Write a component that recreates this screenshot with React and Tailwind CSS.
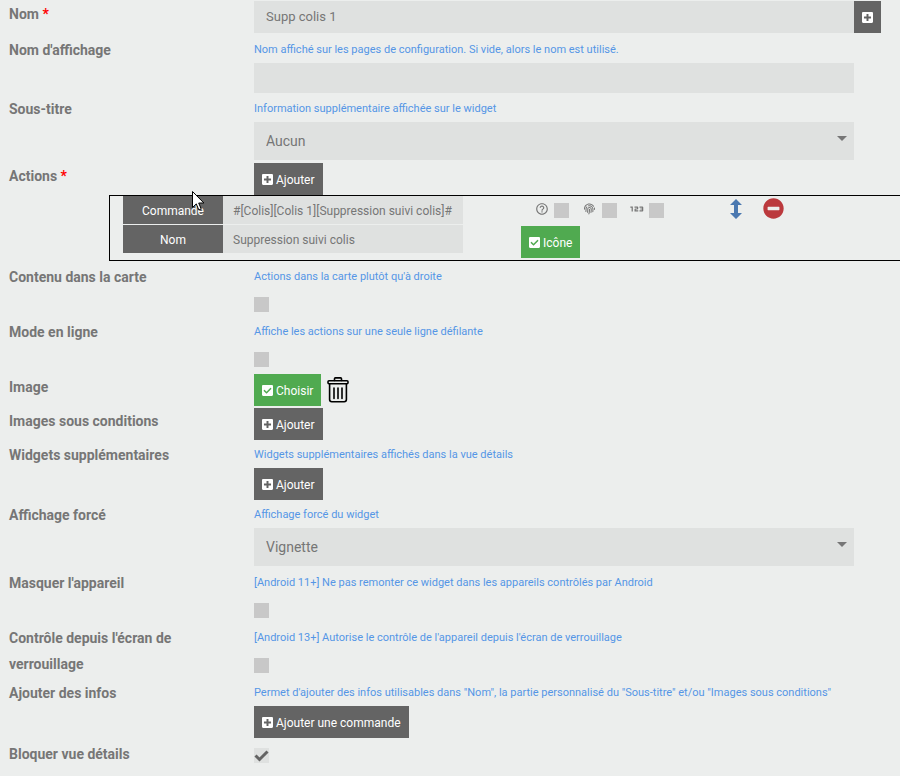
import React from "react";
import { FaPlusSquare, FaCheckSquare, FaFingerprint, FaMinusCircle } from "react-icons/fa";
import { Md123, MdHelpOutline } from "react-icons/md";

const Row = ({ label, htmlFor, required = false, help, className = "pb-[3px]", children }) => (
  <div className={`grid grid-cols-[245px_1fr] items-start pl-[9px] ${className}`}>
    <label htmlFor={htmlFor} className="pr-14 text-sm leading-[26px] font-bold text-[#767676]">
      {label}
      {required && <span className="text-[#ff0000]"> *</span>}
    </label>
    <div className="min-w-0">
      {help && <p className="text-[11px] leading-[26px] text-[#5596e6]">{help}</p>}
      {children}
    </div>
  </div>
);

const Button = ({ icon: Icon, green = false, children }) => (
  <button
    type="button"
    className={`flex h-8 items-center gap-[3px] px-2 pt-px text-xs text-white ${green ? "bg-[#50aa50]" : "bg-[#646464]"}`}
  >
    <Icon className="h-[13px] w-[11px] shrink-0" />
    {children}
  </button>
);

const Checkbox = ({ id, label, defaultChecked = false }) => (
  <span className="relative block h-[15px] w-[15px]">
    <input
      id={id}
      type="checkbox"
      aria-label={label}
      defaultChecked={defaultChecked}
      className="peer block h-[15px] w-[15px] appearance-none bg-[#c8c8c8] checked:bg-[#dfe1e0]"
    />
    <svg
      viewBox="0 0 15 15"
      className="pointer-events-none absolute inset-0 hidden h-[15px] w-[15px] peer-checked:block"
    >
      <path d="M1.5 7.5 5.5 11.5 13.5 3.5" fill="none" stroke="#646464" strokeWidth="3" />
    </svg>
  </span>
);

const CheckboxLine = (props) => (
  <div className="flex h-[26px] items-center pt-0.5">
    <Checkbox {...props} />
  </div>
);

const Select = ({ id, options }) => (
  <div className="relative mr-[46px]">
    <select id={id} className="block h-[38px] w-full appearance-none bg-[#dfe1e0] px-3 text-sm text-[#767676]">
      {options.map((option) => (
        <option key={option}>{option}</option>
      ))}
    </select>
    <svg viewBox="0 0 10 5" className="pointer-events-none absolute top-3.5 right-[7px] h-[5px] w-2.5">
      <path d="M0 0h10L5 5z" fill="#767676" />
    </svg>
  </div>
);

const TrashIcon = () => (
  <svg viewBox="0 0 22 26" className="h-[26px] w-[22px]" fill="none" stroke="#000" strokeWidth="1.6" strokeLinejoin="round" strokeLinecap="round">
    <path d="M7.5 3.5V1.8q0-.9.9-.9h5.2q.9 0 .9.9v1.7" />
    <rect x="1" y="3.8" width="20" height="3" rx="1" />
    <path d="M2.6 7v15.6q0 2.2 2.2 2.2h12.4q2.2 0 2.2-2.2V7" />
    <path d="M7 11v10.5M11 11v10.5M15 11v10.5" />
  </svg>
);

const MoveIcon = () => (
  <svg viewBox="0 0 12 20" className="h-5 w-3" fill="#4a78b0">
    <path d="M6 0l6 6H8v8h4l-6 6-6-6h4V6H0z" />
  </svg>
);

const MousePointer = () => (
  <svg viewBox="0 0 13 20" className="pointer-events-none absolute -top-[5px] left-[82px] h-5 w-[13px]">
    <path d="M.5.5v16l3.8-3.6 2.5 6 2.4-1-2.5-5.9h5.2z" fill="#fff" stroke="#000" />
  </svg>
);

const CommandField = ({ id, label, value }) => (
  <div className="flex h-7 text-xs">
    <label htmlFor={id} className="flex w-[100px] items-center justify-center bg-[#646464] pt-px text-white">
      {label}
    </label>
    <input id={id} defaultValue={value} className="w-60 bg-[#dfe1e0] px-2.5 pt-px text-[#767676]" />
  </div>
);

const ActionCard = () => (
  <div className="relative mb-[3px] ml-[109px] flex items-start border-y border-l border-black pb-[7px] pl-[13px]">
    <div className="flex shrink-0 flex-col gap-px">
      <CommandField id="action-cmd" label="Commande" value="#[Colis][Colis 1][Suppression suivi colis]#" />
      <CommandField id="action-name" label="Nom" value="Suppression suivi colis" />
    </div>
    <div className="-mb-[5px] ml-[58px] shrink-0">
      <div className="mb-px flex h-[29px] items-center pl-3.5 text-[#767676]">
        <MdHelpOutline className="mr-[5px] mb-1 h-3.5 w-3.5" />
        <Checkbox label="Confirmation" />
        <FaFingerprint className="mr-[7px] mb-1 ml-[15px] h-3 w-[11px]" />
        <Checkbox label="Empreinte" />
        <Md123 className="mr-0.5 mb-1 ml-2.5 h-5 w-5" stroke="currentColor" />
        <Checkbox label="Code" />
      </div>
      <Button icon={FaCheckSquare} green>
        Icône
      </Button>
    </div>
    <div className="ml-[66px] flex items-center gap-[21px] pt-0.5">
      <button type="button" aria-label="Déplacer">
        <MoveIcon />
      </button>
      <button type="button" aria-label="Supprimer">
        <FaMinusCircle className="h-[21px] w-[21px] text-[#bb393d]" />
      </button>
    </div>
    <MousePointer />
  </div>
);

export default function App() {
  return (
    <form className="min-h-screen overflow-hidden bg-[#eceeed] pt-px font-[Roboto,sans-serif]">
      <Row label="Nom" htmlFor="name" required className="pb-1">
        <div className="mr-[19px] flex h-8">
          <input id="name" defaultValue="Supp colis 1" className="min-w-0 flex-1 bg-[#dfe1e0] px-3 text-[13px] text-[#767676]" />
          <button type="button" aria-label="Ajouter un nom" className="flex w-[27px] items-center justify-center bg-[#646464] text-white">
            <FaPlusSquare className="h-[13px] w-[11px]" />
          </button>
        </div>
      </Row>
      <Row label="Nom d'affichage" htmlFor="display-name" help="Nom affiché sur les pages de configuration. Si vide, alors le nom est utilisé.">
        <div className="mr-[46px]">
          <input id="display-name" className="block h-[30px] w-full bg-[#dfe1e0] px-3 text-[13px] text-[#767676]" />
        </div>
      </Row>
      <Row label="Sous-titre" htmlFor="subtitle" help="Information supplémentaire affichée sur le widget">
        <Select id="subtitle" options={["Aucun"]} />
      </Row>
      <Row label="Actions" required className="">
        <Button icon={FaPlusSquare}>Ajouter</Button>
      </Row>
      <ActionCard />
      <Row label="Contenu dans la carte" htmlFor="in-card" help="Actions dans la carte plutôt qu'à droite">
        <CheckboxLine id="in-card" />
      </Row>
      <Row label="Mode en ligne" htmlFor="inline" help="Affiche les actions sur une seule ligne défilante">
        <CheckboxLine id="inline" />
      </Row>
      <Row label="Image" className="pb-0.5">
        <div className="flex items-center gap-1.5">
          <Button icon={FaCheckSquare} green>
            Choisir
          </Button>
          <button type="button" aria-label="Supprimer l'image">
            <TrashIcon />
          </button>
        </div>
      </Row>
      <Row label="Images sous conditions" className="pb-0.5">
        <Button icon={FaPlusSquare}>Ajouter</Button>
      </Row>
      <Row label="Widgets supplémentaires" help="Widgets supplémentaires affichés dans la vue détails" className="pb-0.5">
        <Button icon={FaPlusSquare}>Ajouter</Button>
      </Row>
      <Row label="Affichage forcé" htmlFor="display-mode" help="Affichage forcé du widget" className="pb-1">
        <Select id="display-mode" options={["Vignette"]} />
      </Row>
      <Row label="Masquer l'appareil" htmlFor="hide-device" help="[Android 11+] Ne pas remonter ce widget dans les appareils contrôlés par Android">
        <CheckboxLine id="hide-device" />
      </Row>
      <Row label="Contrôle depuis l'écran de verrouillage" htmlFor="lock-screen" help="[Android 13+] Autorise le contrôle de l'appareil depuis l'écran de verrouillage">
        <CheckboxLine id="lock-screen" />
      </Row>
      <Row label="Ajouter des infos" help={'Permet d\'ajouter des infos utilisables dans "Nom", la partie personnalisé du "Sous-titre" et/ou "Images sous conditions"'}>
        <Button icon={FaPlusSquare}>Ajouter une commande</Button>
      </Row>
      <Row label="Bloquer vue détails" htmlFor="block-details">
        <CheckboxLine id="block-details" defaultChecked />
      </Row>
    </form>
  );
}
